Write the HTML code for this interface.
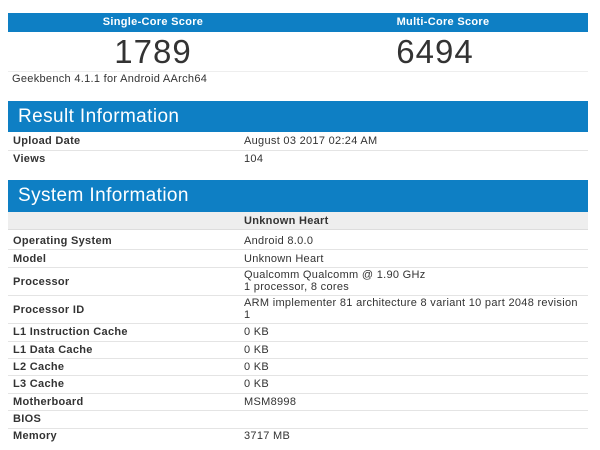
<!DOCTYPE html>
<html><head><style>
body{margin:0;background:#fff;font-family:"Liberation Sans",Arial,sans-serif;color:#333;width:600px;height:450px;overflow:hidden;position:relative;letter-spacing:0.3px}
.a{position:absolute}
.bar{background:#0e7fc4;color:#fff}
.row{position:absolute;left:8px;width:580px;border-bottom:1px solid #e4e4e4;font-size:11px}
.row .l{position:absolute;left:5px;font-weight:bold}
.row .v{position:absolute;left:236px;white-space:nowrap}
</style></head><body>
<div class="a bar" style="left:8px;top:13px;width:580px;height:19px;font-size:11px;font-weight:bold">
<div class="a" style="left:0;width:290px;text-align:center;top:3px">Single-Core Score</div>
<div class="a" style="left:290px;width:290px;text-align:center;top:3px">Multi-Core Score</div>
</div>
<div class="a" style="left:8px;width:290px;text-align:center;top:33px;font-size:33px;letter-spacing:1px;color:#333">1789</div>
<div class="a" style="left:290px;width:290px;text-align:center;top:33px;font-size:33px;letter-spacing:1px;color:#333">6494</div>
<div class="a" style="left:8px;top:71px;width:580px;border-top:1px solid #eee"></div>
<div class="a" style="left:12px;top:73px;font-size:11px">Geekbench 4.1.1 for Android AArch64</div>
<div class="a bar" style="left:8px;top:101px;width:580px;height:31px"><div class="a" style="left:10px;top:5px;font-size:19px;letter-spacing:0.4px">Result Information</div></div>
<div class="row" style="top:132px;height:18px"><span class="l" style="top:3px">Upload Date</span><span class="v" style="top:3px">August 03 2017 02:24 AM</span></div>
<div class="row" style="top:151px;height:16px;border:none"><span class="l" style="top:2px">Views</span><span class="v" style="top:2px">104</span></div>
<div class="a bar" style="left:8px;top:180px;width:580px;height:32px"><div class="a" style="left:10px;top:5px;font-size:19px;letter-spacing:0.4px">System Information</div></div>
<div class="row" style="top:212px;height:17px;background:#eee;border-bottom:1px solid #ddd"><span class="v" style="top:3px;font-weight:bold">Unknown Heart</span></div>
<div class="row" style="top:230px;height:19px"><span class="l" style="top:5px">Operating System</span><span class="v" style="top:5px">Android 8.0.0</span></div>
<div class="row" style="top:250px;height:17px"><span class="l" style="top:3px">Model</span><span class="v" style="top:3px">Unknown Heart</span></div>
<div class="row" style="top:268px;height:27px"><span class="l" style="top:8px">Processor</span><span class="v" style="top:1px;line-height:12px">Qualcomm Qualcomm @ 1.90 GHz<br>1 processor, 8 cores</span></div>
<div class="row" style="top:296px;height:27px"><span class="l" style="top:8px">Processor ID</span><span class="v" style="top:1px;line-height:12px">ARM implementer 81 architecture 8 variant 10 part 2048 revision<br>1</span></div>
<div class="row" style="top:324px;height:17px"><span class="l" style="top:2px">L1 Instruction Cache</span><span class="v" style="top:2px">0 KB</span></div>
<div class="row" style="top:342px;height:16px"><span class="l" style="top:2px">L1 Data Cache</span><span class="v" style="top:2px">0 KB</span></div>
<div class="row" style="top:359px;height:16px"><span class="l" style="top:2px">L2 Cache</span><span class="v" style="top:2px">0 KB</span></div>
<div class="row" style="top:376px;height:17px"><span class="l" style="top:2px">L3 Cache</span><span class="v" style="top:2px">0 KB</span></div>
<div class="row" style="top:394px;height:16px"><span class="l" style="top:2px">Motherboard</span><span class="v" style="top:2px">MSM8998</span></div>
<div class="row" style="top:411px;height:17px"><span class="l" style="top:2px">BIOS</span></div>
<div class="row" style="top:429px;height:17px;border:none"><span class="l" style="top:1px">Memory</span><span class="v" style="top:1px">3717 MB</span></div>
</body></html>
